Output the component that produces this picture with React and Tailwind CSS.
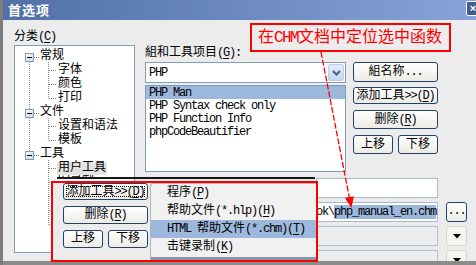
import React from 'react';

// half-width latin run (SimSun style: 6px per char at 12px)
const L = ({ children, className = '' }) => <span className={`tracking-[-1.2px] ${className}`}>{children}</span>;
const Key = ({ c }) => (
    <L>
        (<u className="underline-offset-2">{c}</u>)
    </L>
);

const Btn = ({ className = '', focus, children }) => (
    <div
        className={`flex items-center justify-center rounded-[3px] border border-[#23426a] bg-linear-to-b from-white to-[#ecebe4] text-[12px] leading-none text-black whitespace-nowrap ${focus ? 'outline-1 outline-dotted outline-black outline-offset-[-4px]' : ''} ${className}`}
    >
        {children}
    </div>
);

const treeRows = [
    { t: '常规', lvl: 0 },
    { t: '字体', lvl: 1 },
    { t: '颜色', lvl: 1 },
    { t: '打印', lvl: 1 },
    { t: '文件', lvl: 0 },
    { t: '设置和语法', lvl: 1 },
    { t: '模板', lvl: 1 },
    { t: '工具', lvl: 0 },
    { t: '用户工具', lvl: 1, sel: true },
];

// row centre in page coordinates
const rc = (i) => 56 + 14 * i;

const TreeLines = () => {
    const dots = { stroke: '#8c8c8c', strokeDasharray: '1 1', strokeWidth: 1 };
    const boxes = [0, 4, 7];
    const childGroups = [
        [1, 2, 3],
        [5, 6],
        [8, 9, 10, 11, 12],
    ];
    return (
        <svg className="absolute left-0 top-0" width="119" height="206">
            <defs>
                <linearGradient id="tb" x1="0" y1="0" x2="1" y2="1">
                    <stop offset="0" stopColor="#ffffff" />
                    <stop offset="1" stopColor="#c9d3e0" />
                </linearGradient>
            </defs>
            <g transform="translate(-15 -46)">
                <line x1="29.5" y1="62" x2="29.5" y2="109" {...dots} />
                <line x1="29.5" y1="118" x2="29.5" y2="151" {...dots} />
                {childGroups.map((g, k) => (
                    <g key={k}>
                        <line x1="48.5" y1={rc(g[0]) - 8} x2="48.5" y2={rc(g[g.length - 1]) + 0.5} {...dots} />
                        {g.map((i) => (
                            <line key={i} x1="49" y1={rc(i) + 0.5} x2="57" y2={rc(i) + 0.5} {...dots} />
                        ))}
                    </g>
                ))}
                {boxes.map((i) => {
                    const top = rc(i) - 3;
                    return (
                        <g key={i}>
                            <line x1="34" y1={top + 4.5} x2="39" y2={top + 4.5} {...dots} />
                            <rect x="25.5" y={top + 0.5} width="8" height="8" fill="url(#tb)" stroke="#7f9db9" />
                            <line x1="27" y1={top + 4.5} x2="32" y2={top + 4.5} stroke="#000" />
                        </g>
                    );
                })}
            </g>
        </svg>
    );
};

const LeftCol = () => (
    <div className="ml-[11px] flex w-[121px] shrink-0 flex-col pt-[9px]">
        <div className="h-[16px] leading-[16px]">
            分类<Key c="C" />
        </div>
        <div className="relative h-[208px] border border-[#7f9db9] bg-white pt-[3px]">
            <TreeLines />
            {treeRows.map((r) => (
                <div
                    key={r.t}
                    className={`relative flex h-[14px] items-center whitespace-nowrap ${r.lvl === 0 ? 'pl-[24px]' : 'pl-[42px]'}`}
                >
                    <span className={`px-[1px] leading-[13px] ${r.sel ? 'bg-[#e3e3e3]' : ''}`}>{r.t}</span>
                </div>
            ))}
            {/* next item, mostly hidden behind the pasted menu shot */}
            <div className="relative h-[3px] overflow-hidden pl-[43px] leading-[12px] whitespace-nowrap">
                宏录制
            </div>
        </div>
    </div>
);

const tools = ['PHP Man', 'PHP Syntax check only', 'PHP Function Info', 'phpCodeBeautifier'];

const RightCol = () => (
    <div className="ml-[10px] flex min-w-0 flex-1 flex-col pt-[26px]">
        <div className="h-[14px] leading-[14px] whitespace-nowrap">
            組和工具项目<Key c="G" />
            <L>:</L>
        </div>

        <div className="mt-[2px] flex items-start gap-[7px]">
            <div className="flex h-[21px] w-[201px] items-center border border-[#7f9db9] bg-white pl-[3px] pr-[1px]">
                <L className="flex-1">PHP</L>
                <div className="flex h-[17px] w-[16px] items-center justify-center rounded-[2px] border border-[#c2cde6] bg-linear-to-b from-[#e3ebfb] to-[#c5d4f2]">
                    <svg width="9" height="6" viewBox="0 0 9 6">
                        <path d="M1 1 L4.5 4.5 L8 1" fill="none" stroke="#4d5f86" strokeWidth="2" />
                    </svg>
                </div>
            </div>
            <Btn className="h-[20px] w-[85px]">
                組名称<L>...</L>
            </Btn>
        </div>

        <div className="mt-[2px] flex items-start gap-[7px]">
            <div className="h-[87px] w-[201px] border border-[#7f9db9] bg-white">
                {tools.map((t, i) => (
                    <div
                        key={t}
                        className={`flex h-[13px] items-center whitespace-nowrap pl-[3px] ${i === 0 ? 'bg-[#9db8dd]' : ''}`}
                    >
                        <L>{t}</L>
                    </div>
                ))}
            </div>
            <div className="mt-[2px] flex w-[85px] flex-col gap-[6px]">
                <Btn className="h-[17px]">
                    添加工具<L>&gt;&gt;</L>
                    <Key c="D" />
                </Btn>
                <Btn className="h-[19px]">
                    删除<Key c="R" />
                </Btn>
                <div className="flex gap-[5px]">
                    <Btn className="h-[19px] w-[40px]">上移</Btn>
                    <Btn className="h-[19px] w-[40px]">下移</Btn>
                </div>
            </div>
        </div>

        <div className="mt-[6px] flex flex-col gap-[4px] pr-[9px]">
            <div className="flex items-center justify-end gap-[8px]">
                <div className="h-[20px] w-[122px] border border-[#a5b8cf] bg-white" />
                <div className="w-[21px]" />
            </div>
            <div className="flex items-center justify-end gap-[8px]">
                <div className="flex h-[20px] w-[122px] items-center justify-end overflow-hidden whitespace-nowrap border border-[#a5b8cf] bg-white pr-[1px]">
                    <L>ok\</L>
                    <span className="bg-[#9db8dd] leading-[14px]">
                        <L>php_manual_en.chm</L>
                    </span>
                </div>
                <Btn className="h-[20px] w-[21px] border-[#23426a] pb-[2px]">
                    <L>...</L>
                </Btn>
            </div>
            {[0, 1].map((k) => (
                <div key={k} className="flex items-center justify-end gap-[8px]">
                    <div className="h-[20px] w-[122px] border border-[#b3c2d4] bg-[#ececec]" />
                    <div className="flex h-[20px] w-[21px] items-center justify-center rounded-[3px] border border-[#d6d5cc] bg-[#f5f4ef]">
                        <svg width="8" height="5" viewBox="0 0 8 5">
                            <path d="M0 0 H8 L4 4.5 Z" fill="#000" />
                        </svg>
                    </div>
                </div>
            ))}
        </div>
    </div>
);

const menuItems = [
    { t: <>程序<Key c="P" /></> },
    { t: <>帮助文件<L>(*.hlp)</L><Key c="H" /></> },
    { t: <><L>HTML</L><span className="inline-block w-[6px]" />帮助文件<L>(*.chm)</L><Key c="T" /></>, hi: true },
    { t: <>击键录制<Key c="K" /></> },
];

const Overlay = () => (
    <>
        <div className="absolute left-[57px] top-[177px] h-[2px] w-[258px] bg-[#161616]" />
        <div className="absolute left-[51px] top-[181px] flex h-[81px] w-[267px] border-2 border-[#ff0000] bg-[#ececec]">
            <div className="flex w-[97px] shrink-0 flex-col gap-[6px] pl-[10px]">
                <Btn className="h-[17px] w-[85px]" focus>
                    添加工具<L>&gt;&gt;</L>
                    <Key c="D" />
                </Btn>
                <Btn className="h-[18px] w-[85px]">
                    删除<Key c="R" />
                </Btn>
                <div className="flex gap-[5px]">
                    <Btn className="h-[18px] w-[40px]">上移</Btn>
                    <Btn className="h-[18px] w-[40px]">下移</Btn>
                </div>
            </div>
            <div className="flex min-w-0 flex-1 flex-col rounded-tl-[3px] border-l border-t border-[#b4b4b4] bg-[#f1f1f1]">
                {menuItems.map((m, i) => (
                    <div
                        key={i}
                        className={`flex h-[18px] items-center whitespace-nowrap pl-[16px] ${m.hi ? 'bg-[#9db8dd]' : ''}`}
                    >
                        {m.t}
                    </div>
                ))}
                <div className="mt-auto h-[3px] bg-[#8595ab]" />
            </div>
        </div>
    </>
);

const Callout = () => (
    <div className="absolute left-[250px] top-[23px] flex h-[29px] w-[201px] items-center whitespace-nowrap border-2 border-[#ff0000] pl-[6px] text-[16px] leading-none text-[#ff0000]">
        在<span className="tracking-[-1.6px]">CHM</span>文档中定位选中函数
    </div>
);

const Arrow = () => (
    <svg className="pointer-events-none absolute left-0 top-0" width="476" height="265">
        <line x1="321" y1="52" x2="349.4" y2="198" stroke="#ff0000" strokeWidth="1.3" strokeDasharray="6 2" />
        <polygon points="351.5,208 345,198 353.8,196.3" fill="#ff0000" />
    </svg>
);

const TitleBar = () => (
    <div className="flex h-[20px] shrink-0 items-center overflow-hidden bg-linear-to-r from-[#5170a6] to-[#86a4d8] pl-[5px]">
        <span className="text-[13px] font-bold tracking-[1px] text-white font-['Noto_Sans_CJK_SC',sans-serif]">首选项</span>
        <div className="ml-auto mr-[-4px] mt-[1px] flex h-[15px] w-[14px] items-center justify-center self-start rounded-[2px] border border-white bg-[#3d5c97] text-[11px] font-bold leading-none text-white font-['Liberation_Sans',sans-serif]">
            ×
        </div>
    </div>
);

export default function App() {
    return (
        <div className="relative flex h-[265px] w-[476px] overflow-hidden bg-[#ececec] text-[12px] text-black font-['Liberation_Mono','Noto_Sans_CJK_SC',monospace]">
            <div className="w-[3px] shrink-0 bg-[#7d7d7d]" />
            <div className="flex min-w-0 flex-1 flex-col">
                <TitleBar />
                <div className="flex h-[241px] overflow-hidden">
                    <LeftCol />
                    <RightCol />
                </div>
                <div className="h-[4px] bg-[#8b8b8b]" />
            </div>
            <Overlay />
            <Callout />
            <Arrow />
        </div>
    );
}
